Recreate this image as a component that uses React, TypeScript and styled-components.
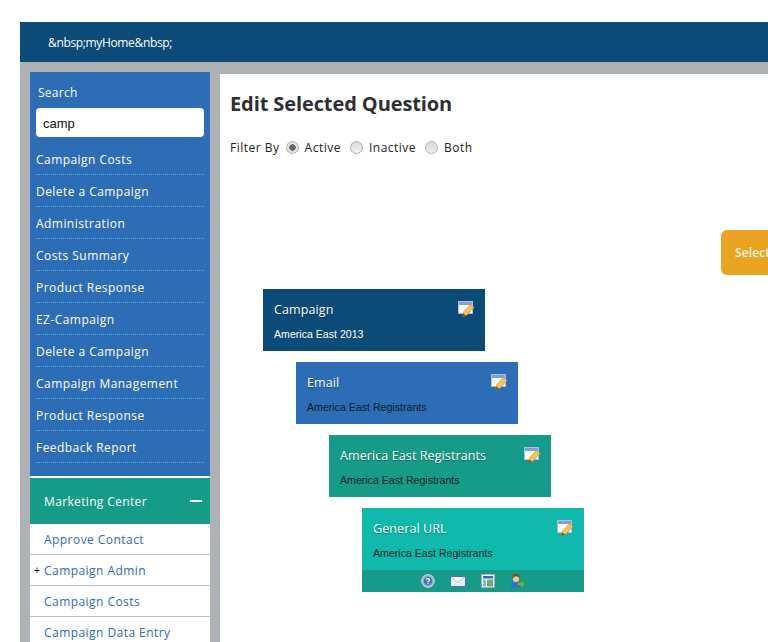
import React from 'react';
import styled, { createGlobalStyle } from 'styled-components';

const searchLinks = [
  'Campaign Costs',
  'Delete a Campaign',
  'Administration',
  'Costs Summary',
  'Product Response',
  'EZ-Campaign',
  'Delete a Campaign',
  'Campaign Management',
  'Product Response',
  'Feedback Report',
];

const centerLinks = [
  { name: 'Approve Contact' },
  { name: 'Campaign Admin', expandable: true },
  { name: 'Campaign Costs' },
  { name: 'Campaign Data Entry' },
];

const cards = [
  { title: 'Campaign', sub: 'America East 2013', color: '#0c4a78', subColor: '#ffffff', indent: 43 },
  { title: 'Email', sub: 'America East Registrants', color: '#2d6db5', subColor: '#0a1a2a', indent: 76 },
  { title: 'America East Registrants', sub: 'America East Registrants', color: '#169b88', subColor: '#06231f', indent: 109 },
  { title: 'General URL', sub: 'America East Registrants', color: '#10b9ab', subColor: '#06231f', indent: 142, tools: true },
];

const GlobalStyle = createGlobalStyle`
  html, body {
    margin: 0;
    padding: 0;
    background: #ffffff;
    overflow: hidden;
  }
  body {
    font-family: "Open Sans", "Liberation Sans", sans-serif;
  }
`;

const Page = styled.div`
  width: 768px;
  height: 642px;
  padding: 22px 0 0 20px;
  box-sizing: border-box;
  overflow: hidden;
`;

const Frame = styled.div`
  width: 748px;
  height: 620px;
  background: #aeb2b5;
  overflow: hidden;
`;

const Header = styled.header`
  height: 40px;
  background: #0c4a78;
  color: #ffffff;
  font-size: 12px;
  font-weight: 500;
  letter-spacing: -0.35px;
  line-height: 42px;
  padding-left: 28px;
`;

const Body = styled.div`
  display: flex;
  align-items: flex-start;
  padding: 10px 0 0 10px;
  gap: 10px;
`;

const Sidebar = styled.aside`
  width: 180px;
  flex: none;
`;

const SearchPanel = styled.div`
  background: #2d6db5;
  height: 404px;
  padding: 13px 6px 0;
  box-sizing: border-box;
`;

const SearchLabel = styled.div`
  color: #ffffff;
  font-size: 12px;
  font-weight: 500;
  letter-spacing: 0.25px;
  line-height: 16px;
  padding-left: 2px;
  margin-bottom: 7px;
`;

const SearchInput = styled.input`
  display: block;
  width: 168px;
  height: 29px;
  box-sizing: border-box;
  border: 0;
  border-radius: 4px;
  background: #ffffff;
  padding: 1px 7px 0;
  margin-bottom: 6px;
  font-family: "Liberation Sans", sans-serif;
  font-size: 13px;
  color: #111111;
  outline: none;
`;

const SearchLink = styled.div`
  height: 32px;
  box-sizing: border-box;
  border-bottom: 1px dotted #45b4e6;
  color: #ffffff;
  font-size: 12px;
  font-weight: 500;
  letter-spacing: 0.45px;
  line-height: 33px;
`;

const CenterHead = styled.div`
  height: 48px;
  box-sizing: border-box;
  border-top: 2px solid #ffffff;
  background: #169b88;
  color: #ffffff;
  font-size: 12px;
  font-weight: 500;
  letter-spacing: 0.35px;
  display: flex;
  align-items: center;
  justify-content: space-between;
  padding: 0 8px 0 14px;
`;

const Minus = styled.span`
  width: 12px;
  height: 2px;
  background: #ffffff;
`;

const CenterList = styled.div`
  background: #ffffff;
`;

const CenterLink = styled.div`
  position: relative;
  height: 31px;
  box-sizing: border-box;
  border-bottom: 1px solid #c0c2c4;
  color: #2d6db5;
  font-size: 12px;
  letter-spacing: 0.45px;
  line-height: 32px;
  padding-left: 14px;
`;

const Plus = styled.span`
  position: absolute;
  left: 4px;
  top: 0;
  color: #000000;
  font-family: "Liberation Sans", sans-serif;
  font-size: 10px;
`;

const Main = styled.main`
  flex: 1;
  height: 568px;
  margin-top: 2px;
  background: #ffffff;
  padding: 15px 0 0 10px;
  box-sizing: border-box;
  overflow: hidden;
`;

const Title = styled.h1`
  margin: 0;
  color: #2e2e33;
  font-size: 20px;
  font-weight: 700;
  letter-spacing: -0.1px;
  line-height: 30px;
`;

const Filter = styled.div`
  display: flex;
  align-items: center;
  margin-top: 18px;
  height: 20px;
  color: #222222;
  font-size: 12px;
  letter-spacing: 0.5px;
`;

const FilterLabel = styled.span`
  margin-right: 6px;
`;

const Radio = styled.span<{ $on?: boolean }>`
  width: 13px;
  height: 13px;
  box-sizing: border-box;
  border-radius: 50%;
  border: 1px solid #b4b4b4;
  background: ${(p) =>
    p.$on
      ? 'radial-gradient(circle, #666666 0 3px, #e2e2e2 3.5px)'
      : 'linear-gradient(#d8d8d8, #f0f0f0)'};
  margin-right: 6px;
`;

const RadioText = styled.span`
  margin-right: 9px;
`;

const SelectRow = styled.div`
  margin-top: 73px;
  height: 45px;
  width: 600px;
`;

const SelectButton = styled.div`
  width: 100px;
  height: 45px;
  margin-left: 491px;
  background: #eba421;
  border-radius: 6px;
  color: #fbf3e0;
  font-size: 12px;
  font-weight: 600;
  letter-spacing: 0.1px;
  line-height: 45px;
  padding-left: 14px;
  box-sizing: border-box;
`;

const CardStack = styled.div`
  display: flex;
  flex-direction: column;
  gap: 11px;
  margin-top: 14px;
  margin-left: -10px;
`;

const Card = styled.div<{ $color: string; $indent: number }>`
  width: 222px;
  margin-left: ${(p) => p.$indent}px;
  background: ${(p) => p.$color};
`;

const CardTop = styled.div`
  position: relative;
  height: 62px;
  padding: 12px 11px 0;
  box-sizing: border-box;
`;

const CardTitle = styled.div`
  color: #ffffff;
  font-size: 12.5px;
  font-weight: 500;
  letter-spacing: 0.1px;
  line-height: 18px;
  text-shadow: 0 1px 1px rgba(0, 0, 0, 0.35);
`;

const CardSub = styled.div<{ $color: string }>`
  margin-top: 8px;
  color: ${(p) => p.$color};
  font-family: "Liberation Sans", sans-serif;
  font-size: 10.6px;
  line-height: 14px;
`;

const EditSlot = styled.span`
  position: absolute;
  right: 10px;
  top: 12px;
  line-height: 0;
`;

const ToolBar = styled.div`
  height: 22px;
  background: #169b88;
  display: flex;
  align-items: center;
  justify-content: center;
  gap: 15px;
  box-sizing: border-box;
`;

const EditIcon = () => (
  <svg width="17" height="16" viewBox="0 0 17 16">
    <rect x="0.5" y="0.5" width="14" height="12" fill="#ffffff" stroke="#a9c0e8" />
    <rect x="1" y="1" width="13" height="3" fill="#7f9fde" />
    <path d="M5.5 11 L12.5 3.5 L16 6.5 L9 14 L5 15.5 Z" fill="#f3c45f" stroke="#d59a3a" strokeWidth="0.8" />
    <path d="M4.5 16 L5.3 12.5 L8 14.6 Z" fill="#7a4e1c" />
  </svg>
);

const HelpIcon = () => (
  <svg width="14" height="14" viewBox="0 0 14 14">
    <circle cx="7" cy="7" r="6.3" fill="#8fb0dc" stroke="#d5e2f2" />
    <circle cx="7" cy="7" r="4.2" fill="#4a76b4" />
    <path d="M5.4 5.6 C5.6 4.2 8.6 4.2 8.6 5.8 C8.6 7 7 6.8 7 8" fill="none" stroke="#ffffff" strokeWidth="1.2" />
    <rect x="6.4" y="8.8" width="1.3" height="1.3" fill="#ffffff" />
  </svg>
);

const MailIcon = () => (
  <svg width="16" height="11" viewBox="0 0 16 11">
    <rect x="0.5" y="0.5" width="15" height="10" fill="#e4eefb" stroke="#4a72b8" />
    <path d="M1 1 L8 6.5 L15 1" fill="#ffffff" stroke="#a8c0e4" />
  </svg>
);

const LayoutIcon = () => (
  <svg width="14" height="14" viewBox="0 0 14 14">
    <rect x="0.5" y="0.5" width="13" height="13" fill="#ffffff" stroke="#9fb4d8" />
    <rect x="2" y="2" width="10" height="2.5" fill="#2f6fb0" />
    <rect x="2" y="5.5" width="3" height="7" fill="#8fb4dc" />
    <rect x="6" y="5.5" width="6" height="7" fill="#6fae6a" />
  </svg>
);

const UserIcon = () => (
  <svg width="16" height="16" viewBox="0 0 16 16">
    <path d="M1 15 V12 C1 9 3 8.5 6 8.5 C9 8.5 10 10 10 15 Z" fill="#2f74c8" />
    <rect x="3" y="3" width="6" height="6" rx="2.5" fill="#f0c29a" />
    <path d="M2.5 5 C2 -0.5 10 -0.5 9.5 4.5 L6 3 Z" fill="#7a4a20" />
    <path d="M7.5 9.5 H10.5 V7 L15.5 11 L10.5 15.5 V12.5 H7.5 Z" fill="#6eae5e" stroke="#3f7d3a" strokeWidth="0.6" />
  </svg>
);

const App = () => (
  <Page>
    <GlobalStyle />
    <Frame>
      <Header>&amp;nbsp;myHome&amp;nbsp;</Header>
      <Body>
        <Sidebar>
          <SearchPanel>
            <SearchLabel>Search</SearchLabel>
            <SearchInput defaultValue="camp" />
            {searchLinks.map((name, i) => (
              <SearchLink key={i}>{name}</SearchLink>
            ))}
          </SearchPanel>
          <CenterHead>
            Marketing Center
            <Minus />
          </CenterHead>
          <CenterList>
            {centerLinks.map(({ name, expandable }) => (
              <CenterLink key={name}>
                {expandable && <Plus>+</Plus>}
                {name}
              </CenterLink>
            ))}
          </CenterList>
        </Sidebar>
        <Main>
          <Title>Edit Selected Question</Title>
          <Filter>
            <FilterLabel>Filter By</FilterLabel>
            <Radio $on />
            <RadioText>Active</RadioText>
            <Radio />
            <RadioText>Inactive</RadioText>
            <Radio />
            <RadioText>Both</RadioText>
          </Filter>
          <SelectRow>
            <SelectButton>Select</SelectButton>
          </SelectRow>
          <CardStack>
            {cards.map((c) => (
              <Card key={c.title} $color={c.color} $indent={c.indent}>
                <CardTop>
                  <CardTitle>{c.title}</CardTitle>
                  <CardSub $color={c.subColor}>{c.sub}</CardSub>
                  <EditSlot>
                    <EditIcon />
                  </EditSlot>
                </CardTop>
                {c.tools && (
                  <ToolBar>
                    <HelpIcon />
                    <MailIcon />
                    <LayoutIcon />
                    <UserIcon />
                  </ToolBar>
                )}
              </Card>
            ))}
          </CardStack>
        </Main>
      </Body>
    </Frame>
  </Page>
);

export default App;
